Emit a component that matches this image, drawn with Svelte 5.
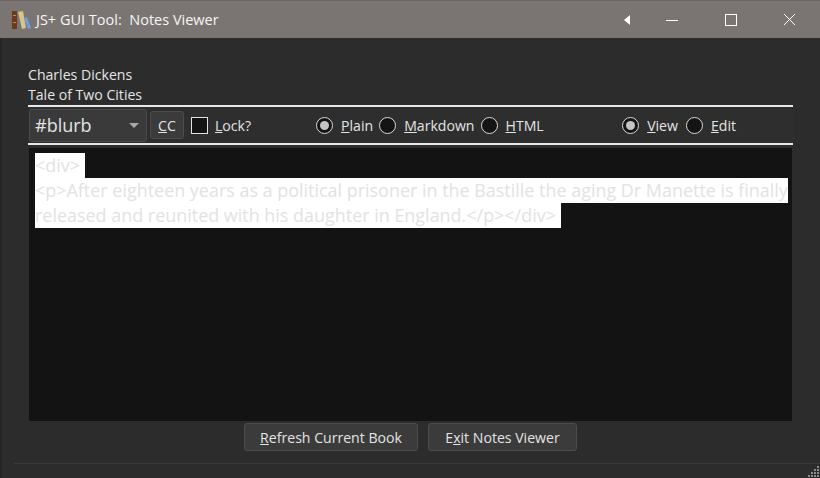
<script lang="ts">
  let format = $state('plain');
  let mode = $state('view');
  let locked = $state(false);

  const formats = [
    { id: 'plain', key: 'P', rest: 'lain' },
    { id: 'markdown', key: 'M', rest: 'arkdown' },
    { id: 'html', key: 'H', rest: 'TML' },
  ];
  const modes = [
    { id: 'view', key: 'V', rest: 'iew' },
    { id: 'edit', key: 'E', rest: 'dit' },
  ];
  // trailing spaces stand in for the selected newline
  const noteLines = [
    '<div> ',
    '<p>After eighteen years as a political prisoner in the Bastille the aging Dr Manette is finally',
    'released and reunited with his daughter in England.</p></div> ',
  ];
</script>

<div class="window">
  <header class="titlebar">
    <svg class="app-icon" width="22" height="22" viewBox="0 0 22 22" aria-hidden="true">
      <rect x="1" y="2" width="5" height="18" fill="#6b3b1c" />
      <rect x="2" y="6" width="3" height="1" fill="#c58a45" />
      <rect x="2" y="13" width="3" height="1" fill="#c58a45" />
      <path d="M7 3l5-1 3 17-4 1z" fill="#d9c48a" />
      <path d="M13 9l3-1 4 11-3 1z" fill="#6f9be0" />
    </svg>
    <span class="title">JS+ GUI Tool:&nbsp; Notes Viewer</span>
    <div class="window-controls">
      <span class="ctl back">
        <svg width="6" height="10" viewBox="0 0 6 10" aria-hidden="true"><path d="M0 5l6-5v10z" fill="#fff" /></svg>
      </span>
      <span class="ctl">
        <svg width="12" height="12" viewBox="0 0 12 12" aria-hidden="true"><path d="M0 6.5h12" stroke="#fff" /></svg>
      </span>
      <span class="ctl">
        <svg width="12" height="12" viewBox="0 0 12 12" aria-hidden="true"><rect x="0.5" y="0.5" width="11" height="11" fill="none" stroke="#fff" /></svg>
      </span>
      <span class="ctl">
        <svg width="13" height="13" viewBox="0 0 13 13" aria-hidden="true"><path d="M1 1l11 11M12 1L1 12" stroke="#fff" /></svg>
      </span>
    </div>
  </header>

  <main class="content">
    <div class="book">
      <div>Charles Dickens</div>
      <div>Tale of Two Cities</div>
    </div>

    <div class="toolbar">
      <div class="combo">
        <span>#blurb</span>
        <i class="caret"></i>
      </div>
      <button class="btn cc"><u>C</u>C</button>
      <button class="check" class:on={locked} aria-label="Lock" onclick={() => (locked = !locked)}></button>
      <span class="label lock"><u>L</u>ock?</span>

      <div class="radios formats">
        {#each formats as f}
          <button class="radio-row" onclick={() => (format = f.id)}>
            <span class="radio" class:on={format === f.id}></span>
            <span class="label"><u>{f.key}</u>{f.rest}</span>
          </button>
        {/each}
      </div>

      <div class="radios modes">
        {#each modes as m}
          <button class="radio-row" onclick={() => (mode = m.id)}>
            <span class="radio" class:on={mode === m.id}></span>
            <span class="label"><u>{m.key}</u>{m.rest}</span>
          </button>
        {/each}
      </div>
    </div>

    <div class="editor">
      {#each noteLines as line}
        <div class="line">{line}</div>
      {/each}
    </div>

    <div class="actions">
      <button class="btn action refresh"><u>R</u>efresh Current Book</button>
      <button class="btn action exit">E<u>x</u>it Notes Viewer</button>
    </div>
  </main>

  <footer class="statusbar">
    <svg class="grip" width="12" height="12" viewBox="0 0 12 12" aria-hidden="true">
      <g fill="#8a8a8a">
        <rect x="9" y="0" width="2" height="2" />
        <rect x="6" y="3" width="2" height="2" />
        <rect x="9" y="3" width="2" height="2" />
        <rect x="3" y="6" width="2" height="2" />
        <rect x="6" y="6" width="2" height="2" />
        <rect x="9" y="6" width="2" height="2" />
        <rect x="0" y="9" width="2" height="2" />
        <rect x="3" y="9" width="2" height="2" />
        <rect x="6" y="9" width="2" height="2" />
        <rect x="9" y="9" width="2" height="2" />
      </g>
    </svg>
  </footer>
</div>

<style>
  :global(body) {
    margin: 0;
    background: #2b2b2b;
  }

  .window {
    width: 820px;
    height: 478px;
    display: flex;
    flex-direction: column;
    overflow: hidden;
    background: #2c2c2c;
    box-shadow: inset 2px 0 0 #242424;
    color: #e4e4e4;
    font-family: 'Open Sans', 'Noto Sans', sans-serif;
    font-size: 14.1px;
  }

  button {
    font: inherit;
    color: inherit;
    padding: 0;
    background: none;
    border: none;
  }

  .titlebar {
    height: 38px;
    flex: none;
    display: flex;
    align-items: center;
    padding-left: 11px;
    background: #7a7472;
    border-top: 1px solid #6b6866;
    box-sizing: border-box;
    color: #f6f6f6;
  }

  .app-icon {
    flex: none;
  }

  .title {
    margin-left: 3px;
    font-size: 14.5px;
  }

  .window-controls {
    margin-left: auto;
    margin-right: 1px;
    display: flex;
    align-items: center;
  }

  .ctl {
    width: 59px;
    display: flex;
    justify-content: center;
  }

  .ctl.back {
    width: 34px;
    margin-right: -2px;
  }

  .content {
    flex: 1;
    display: flex;
    flex-direction: column;
    padding: 27px 27px 0 28px;
    min-height: 0;
  }

  .book {
    line-height: 20px;
    height: 40px;
  }

  .toolbar {
    height: 36px;
    display: flex;
    align-items: center;
    border-top: 2px solid #e8e8e8;
    border-bottom: 2px solid #e8e8e8;
    background: #2e2e2e;
    margin-bottom: 3px;
  }

  .combo {
    width: 118px;
    height: 33px;
    margin-left: 1px;
    box-sizing: border-box;
    display: flex;
    align-items: center;
    justify-content: space-between;
    padding: 0 7px 0 5px;
    background: #3a3a3a;
    border: 1px solid #4a4a4a;
    border-radius: 3px;
    font-size: 18px;
  }

  .caret {
    width: 0;
    height: 0;
    border-left: 5px solid transparent;
    border-right: 5px solid transparent;
    border-top: 5px solid #a8a8a8;
  }

  .btn {
    box-sizing: border-box;
    background: #3b3b3b;
    border: 1px solid #4c4c4c;
    border-radius: 3px;
  }

  .cc {
    width: 34px;
    height: 28px;
    margin-left: 3px;
  }

  .check {
    width: 17px;
    height: 17px;
    margin-left: 7px;
    box-sizing: border-box;
    background: #141414;
    border: 1px solid #e2e2e2;
  }

  .lock {
    margin-left: 7px;
  }

  .radios {
    display: flex;
    align-items: center;
    gap: 8px;
  }

  .formats {
    margin-left: 65px;
    gap: 6px;
  }

  .modes {
    margin-left: auto;
    margin-right: 57px;
  }

  .radio-row {
    display: flex;
    align-items: center;
    gap: 8px;
  }

  .radio {
    width: 17px;
    height: 17px;
    box-sizing: border-box;
    border-radius: 50%;
    border: 1px solid #dcdcdc;
    background: #141414;
    display: grid;
    place-items: center;
  }

  .radio.on::after {
    content: '';
    width: 9px;
    height: 9px;
    border-radius: 50%;
    background: #c4c4c4;
  }

  .editor {
    height: 273px;
    flex: none;
    margin: 0 1px;
    box-sizing: border-box;
    padding: 5px 6px;
    background: #131313;
    font-size: 17.95px;
    line-height: 25px;
    color: #e2e2e2;
    white-space: pre;
    overflow: hidden;
  }

  .line {
    width: fit-content;
    background: #fff;
  }

  .actions {
    display: flex;
    justify-content: center;
    gap: 10px;
    margin-top: 2px;
  }

  .action {
    height: 28px;
  }

  .refresh {
    width: 174px;
  }

  .exit {
    width: 149px;
  }

  .statusbar {
    margin: auto 0 0 14px;
    height: 14px;
    flex: none;
    position: relative;
    border-top: 1px solid #3a3a3a;
  }

  .grip {
    position: absolute;
    right: 0;
    bottom: 0;
  }
</style>
